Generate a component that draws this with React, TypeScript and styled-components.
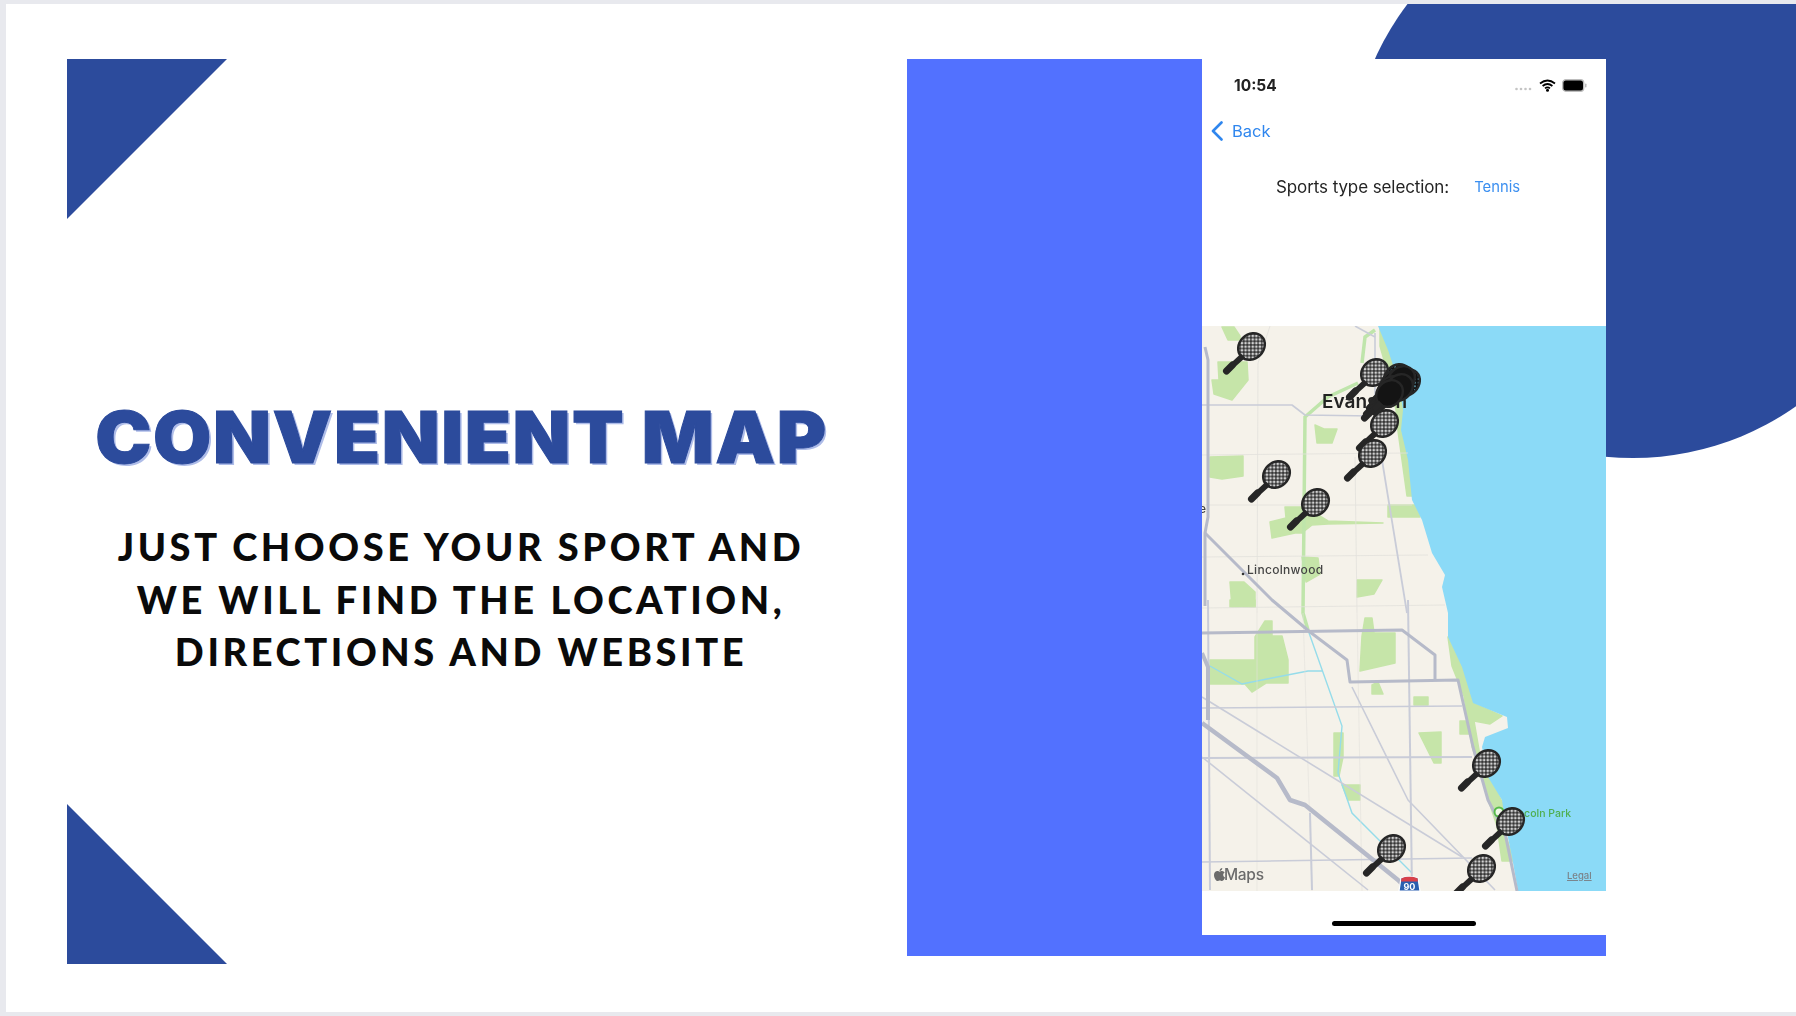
import React from "react";
import styled, { createGlobalStyle } from "styled-components";
import { FaApple } from "react-icons/fa";

const Global = createGlobalStyle`
  html, body { margin: 0; padding: 0; background: #e8e9ee; }
  #root { width: 1796px; height: 1016px; overflow: hidden; }
`;

const Page = styled.div`
  box-sizing: border-box;
  width: 1796px;
  height: 1016px;
  padding: 4px 0 4px 6px;
  background: #e8e9ee;
`;
const Slide = styled.main`
  position: relative;
  display: grid;
  grid-template-columns: 901px 699px;
  height: 1008px;
  background: #fff;
  overflow: hidden;
`;
const Circle = styled.div`
  position: absolute;
  left: 1344px;
  top: -112px;
  width: 566px;
  height: 566px;
  border-radius: 50%;
  background: #2c4b9c;
`;
const TextColumn = styled.section`
  display: flex;
  flex-direction: column;
  justify-content: space-between;
  padding: 55px 0 48px 61px;
`;
const Triangle = styled.div<{ $flip?: boolean }>`
  flex: none;
  width: 160px;
  height: 160px;
  background: #2c4b9c;
  clip-path: ${(p) =>
    p.$flip ? "polygon(0 0, 100% 100%, 0 100%)" : "polygon(0 0, 100% 0, 0 100%)"};
`;
const Copy = styled.div`
  display: flex;
  flex-direction: column;
  align-items: center;
  margin: 50px 0 0 -52px;
  gap: 41px;
`;
const Title = styled.h1`
  margin: 0;
  font: 900 71px/84px Inter, sans-serif;
  letter-spacing: 1.5px;
  white-space: nowrap;
  color: #2c4b9c;
  -webkit-text-stroke: 1px #2c4b9c;
  text-shadow: 2px 2px 0 #aebce8;
  transform: scaleX(1.06);
`;
const Subtitle = styled.p`
  margin: 0;
  font: 900 38px/52.5px Lato, sans-serif;
  letter-spacing: 3.6px;
  text-align: center;
  white-space: nowrap;
  color: #0a0a0a;
`;
const BluePanel = styled.section`
  display: flex;
  justify-content: flex-end;
  align-items: flex-start;
  position: relative;
  align-self: start;
  margin-top: 55px;
  height: 897px;
  background: #5271ff;
`;
const Phone = styled.div`
  display: flex;
  flex-direction: column;
  width: 404px;
  height: 876px;
  background: #fff;
  font-family: Inter, sans-serif;
  filter: blur(0.35px);
`;
const StatusBar = styled.div`
  display: flex;
  align-items: center;
  justify-content: space-between;
  height: 52px;
  padding: 0 19px 0 32px;
  flex: none;
`;
const Time = styled.span`
  font-size: 15.5px;
  font-weight: 700;
  color: #222;
`;
const StatusIcons = styled.div`
  display: flex;
  align-items: center;
  gap: 6px;
`;
const NavRow = styled.div`
  display: flex;
  align-items: center;
  gap: 9px;
  height: 40px;
  padding-left: 9px;
  flex: none;
  color: #2f86ee;
  font-size: 16.5px;
`;
const SelectRow = styled.div`
  display: flex;
  align-items: center;
  height: 72px;
  padding-left: 74px;
  gap: 25px;
  flex: none;
`;
const SelectLabel = styled.span`
  font-size: 17px;
  color: #242424;
  letter-spacing: -0.1px;
`;
const SelectValue = styled.span`
  font-size: 14.8px;
  color: #3b8ff0;
`;
const MapBox = styled.svg`
  display: block;
  margin-top: 103px;
  flex: none;
  width: 404px;
  height: 565px;
  background: #f5f2ea;
`;
const Footer = styled.div`
  flex: 1;
  display: flex;
  justify-content: center;
  align-items: flex-end;
  padding-bottom: 9px;
`;
const HomeBar = styled.div`
  width: 144px;
  height: 5px;
  border-radius: 3px;
  background: #000;
`;
const CityLabel = styled.text`
  font: 600 19px Inter, sans-serif;
  fill: #222;
`;
const PlaceLabel = styled.text`
  font: 500 12px Inter, sans-serif;
  letter-spacing: 0.3px;
  fill: #444;
`;
const ParkLabel = styled.text`
  font: 500 10.5px Inter, sans-serif;
  fill: #4fae4f;
`;
const MapsLabel = styled.text`
  font: 500 15.5px Inter, sans-serif;
  letter-spacing: -0.3px;
  fill: #6b6b6b;
`;
const LegalLabel = styled.text`
  font: 500 9.5px Inter, sans-serif;
  fill: #7a8288;
  text-decoration: underline;
`;
const ShieldText = styled.text`
  font: 700 9px Inter, sans-serif;
  fill: #fff;
`;
const Park = styled.polygon`
  fill: #c6e5a9;
  stroke: #c6e5a9;
  stroke-width: 1.5;
  stroke-linejoin: round;
`;

const parks: string[] = [
  "20,1 32,1 38,10 38,14 26,14",
  "16,36 45,36 46,54 30,74 12,68 10,54 17,54",
  "8,131 41,130 41,150 20,153 8,151",
  "113,99 122,103 135,103 130,117 115,117",
  "83,181 103,181 126,195 181,197 126,198 110,199 100,207 93,207 70,212 68,196 84,192",
  "186,179 213,179 218,191 186,191",
  "100,231 116,232 118,248 104,256",
  "28,256 42,256 53,266 53,281 30,281",
  "155,254 180,254 172,268 155,271",
  "28,274 53,274 53,281 28,281",
  "160,310 163,292 170,292 172,307 193,307 193,337 158,345",
  "8,334 53,334 53,311 63,295 70,295 70,310 80,310 86,334 86,357 64,357 50,366 43,358 8,358",
  "170,359 176,356 181,368 170,368",
  "212,371 226,371 226,379 212,379",
  "217,407 239,406 239,437 232,437",
  "132,407 141,407 141,431 137,450 132,450",
  "140,459 158,459 158,474 146,474",
  "258,395 264,395 270,408 258,408",
];

const coastGreen = "178,0 186,6 190,30 198,58 203,84 204,104 208,130 213,170 205,170 196,105 194,84 188,55 178,20";
const coastGreen2 = "246,311 260,341 271,377 300,390 288,398 272,395 278,430 290,455 302,480 304,510 312,535 300,535 295,500 285,470 270,420 262,370 250,340";

const water =
  "176,0 186,24 196,54 201,84 199,104 206,134 210,174 220,194 230,227 243,249 240,261 246,287 246,311 260,341 271,377 305,391 306,402 283,411 280,421 286,451 300,474 305,507 310,531 316,565 404,565 404,0";

type Road = { d: string; w: number };
const roads: Road[] = [
  { d: "M68 0L56 37L55 287", w: 0.8 },
  { d: "M0 129L206 127", w: 0.8 },
  { d: "M0 179L210 179", w: 0.8 },
  { d: "M0 231L226 229", w: 0.8 },
  { d: "M0 282L243 279", w: 0.8 },
  { d: "M153 131L155 287", w: 0.8 },
  { d: "M55 287L55 565M101 287L110 565M155 287L160 565", w: 0.6 },
  { d: "M0 79L90 79L103 89L170 90", w: 1.6 },
  { d: "M173 7L173 84", w: 1.6 },
  { d: "M153 0L173 11", w: 1.6 },
  { d: "M180 134L205 287", w: 1.8 },
  { d: "M0 382L260 380", w: 1.6 },
  { d: "M0 432L270 431", w: 2.2 },
  { d: "M0 536L270 532", w: 1.6 },
  { d: "M0 371L260 531", w: 1.6 },
  { d: "M0 431L166 564", w: 1.6 },
  { d: "M150 361L206 474L293 564", w: 1.6 },
  { d: "M206 274L210 564", w: 2 },
  { d: "M108 487L110 564", w: 2 },
  { d: "M6 274L8 564", w: 2 },
  { d: "M3 21L6 34L6 191L3 207L3 280", w: 3 },
  { d: "M3 207L70 274L108 306L145 334L148 356L256 354L271 421L286 474L303 507L315 565", w: 3 },
  { d: "M0 307L200 304L233 329L233 354", w: 3 },
  { d: "M0 327L6 341L6 394", w: 4 },
  { d: "M0 397L75 452L88 474L103 479L196 554L207 565", w: 4.5 },
];

const roadColour = (w: number) => (w < 1 ? "#e2e1dc" : w < 3 ? "#c9ccd8" : "#b6bac9");

const rackets: [number, number][] = [
  [20, 7],
  [143, 33],
  [153, 84],
  [141, 114],
  [45, 135],
  [84, 163],
  [255, 424],
  [279, 482],
  [160, 509],
  [250, 529],
];
const clusterRackets: [number, number][] = [
  [166, 38],
  [175, 43],
  [163, 44],
  [170, 40],
  [160, 50],
  [168, 48],
  [158, 54],
];

function Racket({ x, y, fill = "url(#mesh)" }: { x: number; y: number; fill?: string }) {
  return (
    <g transform={`translate(${x} ${y})`}>
      <ellipse cx="29.5" cy="13.5" rx="12.2" ry="14.4" transform="rotate(45 29.5 13.5)" fill={fill} stroke="#262626" strokeWidth="2.4" />
      <path d="M19 20.5L23 25L13.5 33.5L9.5 29.5Z" fill="#262626" />
      <path d="M10.5 32L4.5 38" stroke="#262626" strokeWidth="7" strokeLinecap="round" />
    </g>
  );
}

function TheMap() {
  return (
    <MapBox viewBox="0 0 404 565">
      <defs>
        <pattern id="mesh" width="3.6" height="3.6" patternUnits="userSpaceOnUse" patternTransform="rotate(45)">
          <rect width="3.6" height="3.6" fill="#333" />
          <circle cx="1.8" cy="1.8" r="1.35" fill="#ececec" fillOpacity="0.85" />
        </pattern>
        <pattern id="meshDark" width="3.6" height="3.6" patternUnits="userSpaceOnUse" patternTransform="rotate(45)">
          <rect width="3.6" height="3.6" fill="#111" />
          <circle cx="1.8" cy="1.8" r="1" fill="#7fd0ea" fillOpacity="0.7" />
        </pattern>
      </defs>
      {parks.map((p) => (
        <Park key={p} points={p} />
      ))}
      <Park points={coastGreen} />
      <Park points={coastGreen2} />
      <polygon points={water} fill="#8bdaf7" />
      <path d="M173 4L163 11L160 37M156 57L126 71L103 91L101 287L106 304" fill="none" stroke="#bfe5ab" strokeWidth="3.5" />
      <path d="M8 340L40 358L70 352L106 345L120 345M106 304L140 400L136 447L150 487L180 517L210 547" fill="none" stroke="#95dcea" strokeWidth="1.4" />
      {roads.map((r) => (
        <path key={r.d} d={r.d} fill="none" stroke={roadColour(r.w)} strokeWidth={r.w} strokeLinejoin="round" />
      ))}
      <CityLabel x="120" y="82">Evanston</CityLabel>
      <PlaceLabel x="45" y="248">Lincolnwood</PlaceLabel>
      <circle cx="41" cy="248" r="1.3" fill="#333" />
      <PlaceLabel x="-3" y="187">e</PlaceLabel>
      <ParkLabel x="369" y="491" textAnchor="end">Lincoln Park</ParkLabel>
      <circle cx="297" cy="486" r="4.5" fill="#eef7e6" stroke="#57bb4a" strokeWidth="2" />
      <path d="M199 552Q207 549 216 552L218 565H197Z" fill="#2a5fb0" stroke="#fff" strokeWidth="1.2" />
      <path d="M199.5 552.2Q207 549.5 215.5 552.2L216 555.5H199Z" fill="#d8404a" />
      <ShieldText x="201.5" y="564">90</ShieldText>
      {rackets.map(([x, y]) => (
        <Racket key={`${x}-${y}`} x={x} y={y} />
      ))}
      {clusterRackets.map(([x, y], i) => (
        <Racket key={`${x}-${y}`} x={x} y={y} fill={i < 2 ? "url(#meshDark)" : "#141414"} />
      ))}
      <FaApple x={10} y={541} size={15} color="#6b6b6b" />
      <MapsLabel x="22" y="554">Maps</MapsLabel>
      <LegalLabel x="365" y="553">Legal</LegalLabel>
    </MapBox>
  );
}

function StatusGlyphs() {
  return (
    <StatusIcons>
      <svg width="18" height="4" viewBox="0 0 18 4" style={{ marginTop: 8 }}>
        {[1.5, 6, 10.5, 15].map((x) => (
          <circle key={x} cx={x} cy="2" r="1.3" fill="#c4c4c4" />
        ))}
      </svg>
      <svg width="17" height="13" viewBox="0 0 17 13">
        <path d="M1 4.5Q8.5 -1.5 16 4.5M3.6 7Q8.5 3 13.4 7M6 9.4Q8.5 7.4 11 9.4" fill="none" stroke="#000" strokeWidth="1.8" />
        <circle cx="8.5" cy="11.3" r="1.5" fill="#000" />
      </svg>
      <svg width="25" height="13" viewBox="0 0 25 13">
        <rect x="0.7" y="0.7" width="21" height="11.6" rx="3.2" fill="#000" stroke="#bdbdbd" strokeWidth="1.4" />
        <rect x="23" y="4.5" width="1.5" height="4" rx="0.7" fill="#bdbdbd" />
      </svg>
    </StatusIcons>
  );
}

export default function App() {
  return (
    <Page>
      <Global />
      <Slide>
        <Circle />
        <TextColumn>
          <Triangle />
          <Copy>
            <Title>CONVENIENT MAP</Title>
            <Subtitle>
              JUST CHOOSE YOUR SPORT AND
              <br />
              WE WILL FIND THE LOCATION,
              <br />
              DIRECTIONS AND WEBSITE
            </Subtitle>
          </Copy>
          <Triangle $flip />
        </TextColumn>
        <BluePanel>
          <Phone>
            <StatusBar>
              <Time>10:54</Time>
              <StatusGlyphs />
            </StatusBar>
            <NavRow>
              <svg width="12" height="20" viewBox="0 0 12 20">
                <path d="M10.5 1.5L2 10L10.5 18.5" fill="none" stroke="#2f86ee" strokeWidth="2.6" strokeLinecap="round" strokeLinejoin="round" />
              </svg>
              <span>Back</span>
            </NavRow>
            <SelectRow>
              <SelectLabel>Sports type selection:</SelectLabel>
              <SelectValue>Tennis</SelectValue>
            </SelectRow>
            <TheMap />
            <Footer>
              <HomeBar />
            </Footer>
          </Phone>
        </BluePanel>
      </Slide>
    </Page>
  );
}
